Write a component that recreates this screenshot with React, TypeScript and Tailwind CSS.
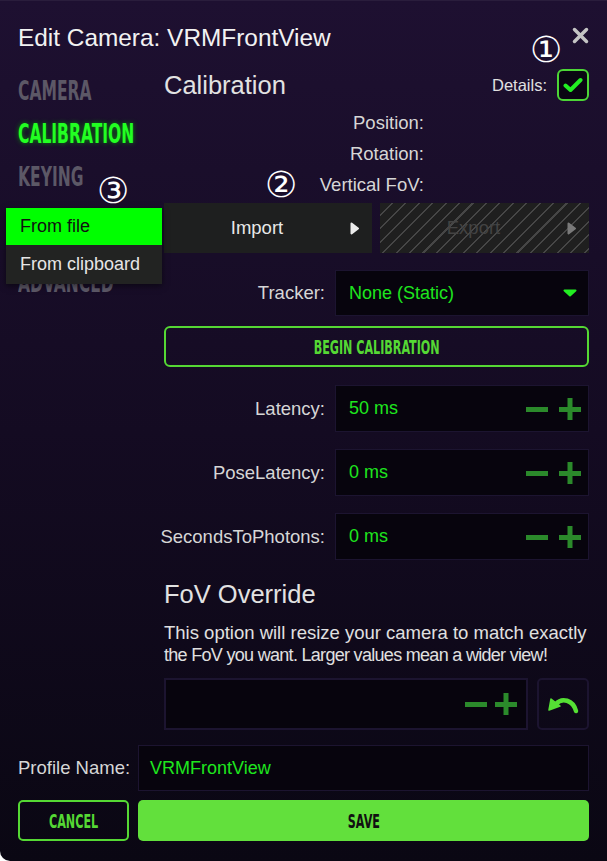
import * as React from 'react';

const cond = "inline-block font-['DejaVu_Sans_Condensed','DejaVu_Sans',sans-serif] font-bold leading-none";

const Circled = ({ n, className }: { n: string; className: string }) => (
  <span className={`absolute font-['DejaVu_Sans',sans-serif] text-[36px] leading-none text-white ${className}`}>
    {n}
  </span>
);

const Tri = ({ color }: { color: string }) => (
  <svg width="9" height="13" viewBox="0 0 9 13">
    <path d="M1.5 1.5 L8 6.5 L1.5 11.5 Z" fill={color} stroke={color} strokeWidth="2" strokeLinejoin="round" />
  </svg>
);

const Stepper = ({ gap }: { gap: string }) => (
  <div className={`flex items-center ${gap}`}>
    <svg width="22" height="22" viewBox="0 0 22 22">
      <rect x="0" y="9" width="22" height="5" fill="#2b8a2b" />
    </svg>
    <svg width="22" height="22" viewBox="0 0 22 22">
      <rect x="0" y="9" width="22" height="5" fill="#2b8a2b" />
      <rect x="8.5" y="0" width="5" height="22" fill="#2b8a2b" />
    </svg>
  </div>
);

const NumberRow = ({ label, value }: { label: string; value: string }) => (
  <div className="flex items-center gap-[10px] h-[47px]">
    <div className="w-[161px] whitespace-nowrap flex justify-end text-[18.5px] text-[#d6d6d6]">{label}</div>
    <div className="flex-1 h-full flex items-center justify-between pl-[13px] pr-[7px] bg-[#07040d] border border-[#1c1430]">
      <span className="text-[18px] text-[#1ee61e]">{value}</span>
      <Stepper gap="gap-[11px]" />
    </div>
  </div>
);

export default function App() {
  const navItem = `${cond} text-[27px] scale-x-[0.64] origin-left`;
  return (
    <div className="relative w-[607px] h-[861px] overflow-hidden rounded-bl-[10px] bg-gradient-to-b from-[#1e1031] via-[#140b22] to-[#0a0713] font-['Liberation_Sans',Arial,sans-serif] text-[#d6d6d6]">
      {/* header */}
      <div className="h-[69px] flex items-start justify-between pt-[22px] px-[18px] border-t border-[#2a1d3c]">
        <h1 className="text-[24.4px] leading-[30px] text-[#f2f2f2]">Edit Camera: VRMFrontView</h1>
        <svg width="17" height="17" viewBox="0 0 17 17" className="mt-[4px]">
          <path d="M2.5 2.5 L14.5 14.5 M14.5 2.5 L2.5 14.5" stroke="#c4c4c4" strokeWidth="3.5" strokeLinecap="round" />
        </svg>
      </div>

      {/* body */}
      <div className="flex">
        <nav className="w-[164px] pl-[18px] pt-[8px] flex flex-col gap-[16px]">
          <span className={`${navItem} text-[#5c5866]`}>CAMERA</span>
          <span className={`${navItem} text-[#22ff22] [text-shadow:0_0_6px_#0a8a0a]`}>CALIBRATION</span>
          <span className={`${navItem} text-[#5c5866]`}>KEYING</span>
          <span className={`${navItem} text-[#5c5866] mt-[63px]`}>ADVANCED</span>
        </nav>

        <main className="w-[425px] flex flex-col">
          <div className="h-[32px] flex items-center justify-between">
            <h2 className="text-[25.5px] leading-[30px] text-[#e2e2e2]">Calibration</h2>
            <div className="flex items-center gap-[10px]">
              <span className="text-[16.5px] text-[#e0e0e0]">Details:</span>
              <div className="w-[32px] h-[32px] rounded-[6px] border-2 border-[#4cd636] bg-[#0a0612] flex items-center justify-center">
                <svg width="20" height="16" viewBox="0 0 20 16">
                  <path d="M2.5 8.5 L7.5 13 L17.5 3" fill="none" stroke="#22ee22" strokeWidth="4" strokeLinecap="round" strokeLinejoin="round" />
                </svg>
              </div>
            </div>
          </div>

          <div className="mt-[6px] flex flex-col">
            {['Position:', 'Rotation:', 'Vertical FoV:'].map((l) => (
              <div key={l} className="h-[31px] w-[260px] flex items-center justify-end text-[18.5px] text-[#d6d6d6]">
                {l}
              </div>
            ))}
          </div>

          <div className="mt-[3px] h-[50px] flex gap-[8px]">
            <div className="w-[208px] flex items-center bg-[#1e1f1f]">
              <span className="flex-1 text-center text-[18.5px] text-[#e8e8e8]">Import</span>
              <span className="w-[22px] flex items-center">
                <Tri color="#ececec" />
              </span>
            </div>
            <div className="flex-1 flex items-center bg-[repeating-linear-gradient(135deg,#1f1f1f_0px,#1f1f1f_8px,#464646_8px,#464646_9.5px)]">
              <span className="flex-1 text-center text-[18.5px] text-[#434343]">Export</span>
              <span className="w-[22px] flex items-center">
                <Tri color="#7a7a7a" />
              </span>
            </div>
          </div>

          <div className="mt-[17px] h-[46px] flex items-center gap-[10px]">
            <div className="w-[161px] text-right text-[18.5px] text-[#d6d6d6]">Tracker:</div>
            <div className="flex-1 h-full flex items-center justify-between pl-[13px] pr-[11px] bg-[#07040d] border border-[#1c1430]">
              <span className="text-[18px] text-[#1ee61e]">None (Static)</span>
              <svg width="14" height="8" viewBox="0 0 14 8">
                <path d="M1.5 1.5 L12.5 1.5 L7 6.5 Z" fill="#22ee22" stroke="#22ee22" strokeWidth="2" strokeLinejoin="round" />
              </svg>
            </div>
          </div>

          <button className="mt-[10px] h-[41px] rounded-[6px] border-2 border-[#55d834] flex items-center justify-center">
            <span className={`${cond} text-[20px] scale-x-[0.62] text-[#55d834]`}>BEGIN CALIBRATION</span>
          </button>

          <div className="mt-[18px] flex flex-col gap-[17px]">
            <NumberRow label="Latency:" value="50 ms" />
            <NumberRow label="PoseLatency:" value="0 ms" />
            <NumberRow label="SecondsToPhotons:" value="0 ms" />
          </div>

          <h2 className="mt-[19px] text-[25.5px] leading-[30px] text-[#e2e2e2]">FoV Override</h2>
          <p className="mt-[12px] leading-[23px] text-[#e0e0e0] whitespace-nowrap">
            <span className="block text-[18.5px]">This option will resize your camera to match exactly</span>
            <span className="block text-[18px] tracking-[-0.7px]">the FoV you want. Larger values mean a wider view!</span>
          </p>

          <div className="mt-[11px] h-[52px] flex gap-[9px]">
            <div className="flex-1 flex items-center justify-end pr-[9px] bg-[#07040d] border-2 border-[#1c1430]">
              <Stepper gap="gap-[8px]" />
            </div>
            <button className="w-[52px] rounded-[5px] border-2 border-[#1c1430] flex items-center justify-center">
              <svg width="32" height="20" viewBox="0 0 32 20">
                <path d="M29 17 C 26 6, 15 3, 9 10" fill="none" stroke="#55e034" strokeWidth="4.5" strokeLinecap="round" />
                <path d="M2 16 L4 5 L13 12 Z" fill="#55e034" stroke="#55e034" strokeWidth="1.5" strokeLinejoin="round" />
              </svg>
            </button>
          </div>
        </main>
      </div>

      {/* profile name */}
      <div className="mt-[15px] h-[46px] px-[18px] flex items-center">
        <span className="w-[120px] whitespace-nowrap text-[18.5px] text-[#d6d6d6]">Profile Name:</span>
        <div className="flex-1 h-full flex items-center pl-[11px] bg-[#07040d] border border-[#1c1430]">
          <span className="text-[18px] text-[#1ee61e]">VRMFrontView</span>
        </div>
      </div>

      <div className="mt-[9px] h-[41px] px-[18px] flex gap-[9px]">
        <button className="w-[111px] rounded-[5px] border-2 border-[#55d834] flex items-center justify-center">
          <span className={`${cond} text-[20px] scale-x-[0.62] text-[#55d834]`}>CANCEL</span>
        </button>
        <button className="flex-1 rounded-[5px] bg-[#62e03c] flex items-center justify-center">
          <span className={`${cond} text-[20px] scale-x-[0.62] text-[#111111]`}>SAVE</span>
        </button>
      </div>

      {/* import dropdown */}
      <div className="absolute left-[6px] top-[208px] w-[156px] shadow-[0_2px_6px_rgba(0,0,0,0.5)]">
        <div className="h-[37px] flex items-center pl-[14px] bg-[#00ff00] text-[18px] text-[#111111]">From file</div>
        <div className="h-[39px] flex items-center pl-[14px] bg-[#222322] text-[18px] text-[#e6e6e6]">From clipboard</div>
      </div>

      {/* annotations */}
      <Circled n="①" className="left-[530px] top-[32px]" />
      <Circled n="②" className="left-[265px] top-[167px]" />
      <Circled n="③" className="left-[97px] top-[173px]" />
    </div>
  );
}
